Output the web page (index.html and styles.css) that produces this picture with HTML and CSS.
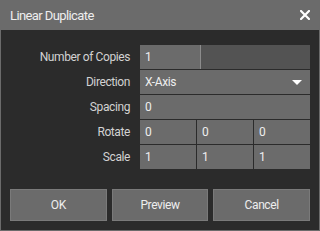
FILE: index.html
```html
<!DOCTYPE html>
<html>
<head>
<meta charset="utf-8">
<link rel="stylesheet" href="styles.css">
</head>
<body>
<div class="dialog">
  <div class="titlebar">
    <span class="title">Linear Duplicate</span>
    <svg class="close" width="10" height="10" viewBox="0 0 10 10"><path d="M1 1L9 9M9 1L1 9" stroke="#fff" stroke-width="2.2" stroke-linecap="square"/></svg>
  </div>
  <div class="body">
    <div class="form">
      <div class="label">Number of Copies</div>
      <div class="field slider"><span class="val">1</span><span class="track"></span></div>
      <div class="label">Direction</div>
      <div class="field select"><span>X-Axis</span><svg width="10" height="5" viewBox="0 0 10 5"><path d="M0 0H10L5 5Z" fill="#fff"/></svg></div>
      <div class="label">Spacing</div>
      <div class="field">0</div>
      <div class="label">Rotate</div>
      <div class="triple"><div class="cell">0</div><div class="cell">0</div><div class="cell">0</div></div>
      <div class="label">Scale</div>
      <div class="triple"><div class="cell">1</div><div class="cell">1</div><div class="cell">1</div></div>
    </div>
    <div class="buttons">
      <button class="btn">OK</button>
      <button class="btn">Preview</button>
      <button class="btn">Cancel</button>
    </div>
  </div>
</div>
</body>
</html>
```
FILE: styles.css
```css
* { box-sizing: border-box; }
html, body { margin: 0; padding: 0; background: #2b2b2b; }
body { font-family: Roboto, "Noto Sans", sans-serif; font-size: 12px; letter-spacing: -0.4px; }
.dialog { width: 320px; height: 231px; display: flex; flex-direction: column; background: #6b6b6b; }
.titlebar { height: 30px; display: flex; align-items: center; justify-content: space-between; padding: 0 10px; color: #eeeeee; font-size: 13px; letter-spacing: -0.6px; }
.close { display: block; }
.body { flex: 1; background: #2b2b2b; margin: 0 1px 1px 1px; padding: 15px 9px 9px 9px; display: flex; flex-direction: column; justify-content: space-between; }
.form { display: grid; grid-template-columns: 120px 170px; column-gap: 10px; row-gap: 1px; grid-auto-rows: 24px; }
.label { color: #d2d2d2; text-align: right; line-height: 24px; }
.field { background: #6b6b6b; color: #eeeeee; line-height: 24px; padding-left: 5px; }
.slider { display: flex; padding-left: 0; }
.slider .val { width: 60px; padding-left: 5px; }
.slider .track { flex: 1; background: #535353; border-left: 1px solid #8c8c8c; }
.select { display: flex; justify-content: space-between; align-items: center; padding-right: 8px; }
.select svg { display: block; }
.triple { display: grid; grid-template-columns: 56px 56px 56px; column-gap: 1px; }
.cell { background: #6b6b6b; color: #eeeeee; line-height: 24px; padding-left: 5px; }
.buttons { display: flex; gap: 5px; }
.btn { flex: 1; height: 32px; background: #6b6b6b; border: 1px solid #7a7a7a; color: #eeeeee; font-family: inherit; font-size: 12px; letter-spacing: -0.4px; padding: 0; }
```
